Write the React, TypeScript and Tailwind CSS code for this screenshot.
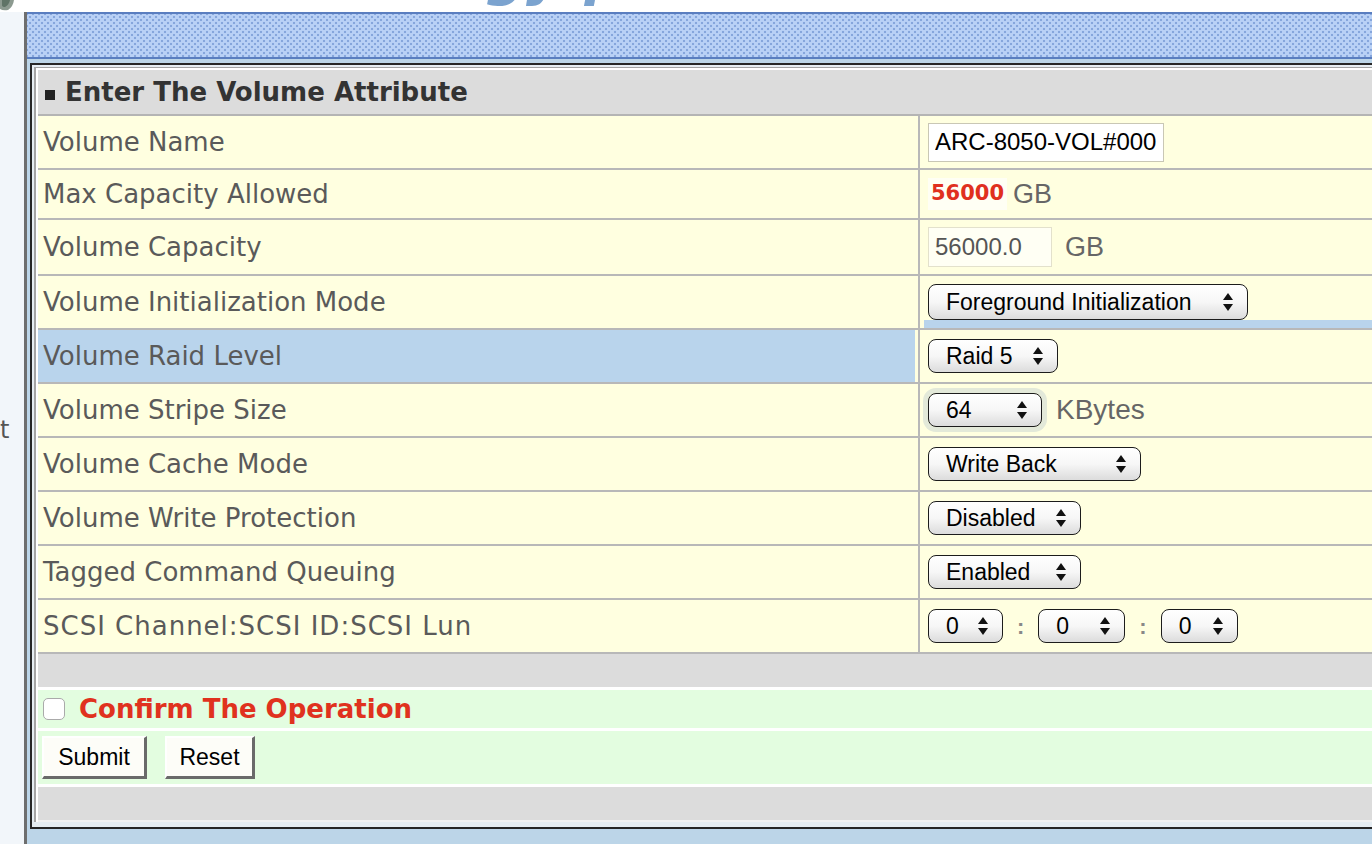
import React from "react";

const LABEL = "font-['DejaVu_Sans','Verdana',sans-serif]";
const UI = "font-['Liberation_Sans','Helvetica','Arial',sans-serif]";

function Arrows() {
  return (
    <svg width="10" height="18" viewBox="0 0 10 18" className="shrink-0">
      <path d="M5 0 L10 7 L0 7 Z" fill="#111" />
      <path d="M0 11 L10 11 L5 18 Z" fill="#111" />
    </svg>
  );
}

function Select({ value, className, focus }: { value: string; className: string; focus?: boolean }) {
  return (
    <div
      className={`flex items-center justify-between rounded-[8px] border-[1.5px] border-[#1c1c1c] bg-gradient-to-b from-white via-[#f7f7f7] to-[#dcdcdc] pl-[17px] pr-[14px] text-[23px] text-black ${UI} ${focus ? "shadow-[0_0_0_5px_#e3e9d9]" : ""} ${className}`}
    >
      <span className="leading-none">{value}</span>
      <Arrows />
    </div>
  );
}

function Unit({ children, className = "" }: { children: React.ReactNode; className?: string }) {
  return <span className={`text-[27px] text-[#666] ${UI} ${className}`}>{children}</span>;
}

type Row = { label: string; h: string; content: React.ReactNode; hl?: boolean; bar?: boolean; wide?: boolean };

const rows: Row[] = [
  {
    label: "Volume Name",
    h: "h-[54px]",
    content: (
      <input
        defaultValue="ARC-8050-VOL#000"
        className={`h-[39px] w-[236px] border border-[#c9c7b5] bg-white pl-[6px] text-[24px] text-black outline-none ${UI}`}
      />
    ),
  },
  {
    label: "Max Capacity Allowed",
    h: "h-[50px]",
    content: (
      <div className="flex items-center">
        <span className={`bg-[#fffff4] px-[3px] text-[21px] font-bold text-[#e0301e] ${LABEL}`}>56000</span>
        <Unit className="ml-[6px]">GB</Unit>
      </div>
    ),
  },
  {
    label: "Volume Capacity",
    h: "h-[56px]",
    content: (
      <div className="flex items-center">
        <input
          defaultValue="56000.0"
          className={`h-[40px] w-[124px] border border-[#e3e1cc] bg-[#fffff4] pl-[6px] text-[24px] text-[#555] outline-none ${UI}`}
        />
        <Unit className="ml-[13px]">GB</Unit>
      </div>
    ),
  },
  {
    label: "Volume Initialization Mode",
    h: "h-[54px]",
    bar: true,
    content: <Select value="Foreground Initialization" className="h-[36px] w-[320px]" />,
  },
  { label: "Volume Raid Level", h: "h-[54px]", hl: true, content: <Select value="Raid 5" className="h-[34px] w-[130px]" /> },
  {
    label: "Volume Stripe Size",
    h: "h-[54px]",
    content: (
      <div className="flex items-center">
        <Select value="64" className="h-[34px] w-[114px]" focus />
        <Unit className="ml-[14px] text-[28px]">KBytes</Unit>
      </div>
    ),
  },
  { label: "Volume Cache Mode", h: "h-[54px]", content: <Select value="Write Back" className="h-[34px] w-[213px]" /> },
  { label: "Volume Write Protection", h: "h-[54px]", content: <Select value="Disabled" className="h-[34px] w-[153px]" /> },
  { label: "Tagged Command Queuing", h: "h-[54px]", content: <Select value="Enabled" className="h-[34px] w-[153px]" /> },
  {
    label: "SCSI Channel:SCSI ID:SCSI Lun",
    h: "h-[54px]",
    wide: true,
    content: (
      <div className="flex items-center">
        <Select value="0" className="h-[34px] w-[75px]" />
        <span className={`mx-[14px] text-[22px] font-bold text-[#888] ${UI}`}>:</span>
        <Select value="0" className="h-[34px] w-[87px]" />
        <span className={`mx-[14px] text-[22px] font-bold text-[#888] ${UI}`}>:</span>
        <Select value="0" className="h-[34px] w-[77px]" />
      </div>
    ),
  },
];

export default function App() {
  return (
    <div className={`flex h-[844px] w-[1372px] flex-col overflow-hidden bg-white ${LABEL}`}>
      {/* clipped banner above the frame */}
      <div className="flex h-[12px] shrink-0 overflow-hidden">
        <svg width="16" height="12" viewBox="0 0 16 12" className="shrink-0">
          <path d="M0 0 H14 Q13 7 8 10 Q3 11 0 9 Z" fill="#8c9a90" />
          <path d="M2 0 H10 Q9 5 5 7 Q2 7 2 5 Z" fill="#5f7366" />
        </svg>
        <span className="ml-[470px] mt-[-53px] whitespace-nowrap text-[56px] font-bold italic leading-none text-[#7ba3cf]">
          gy<span className="ml-[22px]">p</span>
        </span>
      </div>

      <div className="flex min-h-0 flex-1">
        <div className="w-[24px] shrink-0 bg-[#f2f6fa] pt-[400px]">
          <span className="text-[24px] text-[#555]">t</span>
        </div>

        <div className="flex w-[1500px] shrink-0 flex-col border-l-[3px] border-[#6e6e6e] bg-[#bcd5e8]">
          <div className="h-[47px] shrink-0 border-y-2 border-[#5a7ec0] bg-[#b9d1f6] bg-[radial-gradient(circle,#86a6dc_1px,transparent_1.6px),radial-gradient(circle,#86a6dc_1px,transparent_1.6px)] bg-[size:6px_6px] bg-[position:0_0,3px_3px]" />

          <div className="ml-[3px] mt-[4px] border-2 border-[#262626] bg-[#e6edf2] p-[2px] pb-[5px] pr-0">
            <div className="border-l-2 border-t border-[#a4a4a4] bg-white pl-[2px] pt-[2px]">
              <div className="flex h-[46px] items-center border-b-2 border-[#b4b4b4] bg-[#dcdcdc] pl-[7px] text-[#333]">
                <span className="mr-[10px] mt-[6px] h-[10px] w-[10px] bg-[#222]" />
                <span className="text-[26px] font-bold">Enter The Volume Attribute</span>
              </div>

              {rows.map((r) => (
                <div key={r.label} className={`flex border-b-2 border-[#b8b8b8] bg-[#ffffe0] ${r.h}`}>
                  <div className="flex w-[880px] shrink-0 pr-[3px]">
                    <div
                      className={`flex flex-1 items-center pl-[5px] text-[26px] text-[#5a5a5a] ${r.hl ? "bg-[#b9d4ec]" : ""} ${r.wide ? "tracking-[1px]" : ""}`}
                    >
                      {r.label}
                    </div>
                  </div>
                  <div className="relative flex flex-1 items-center border-l-2 border-[#b8b8b8] pl-[8px]">
                    {r.content}
                    {r.bar && <div className="absolute bottom-0 left-[4px] right-0 h-[8px] bg-[#b9d4ec]" />}
                  </div>
                </div>
              ))}

              <div className="box-content h-[33px] border-b-[3px] border-white bg-[#dcdcdc]" />
              <div className="box-content flex h-[38px] items-center border-b-[3px] border-white bg-[#e3fde0] pl-[5px]">
                <input type="checkbox" className="h-[22px] w-[22px] appearance-none rounded-[5px] border border-[#aaa] bg-white" />
                <span className="ml-[14px] text-[26px] font-bold text-[#e0321e]">Confirm The Operation</span>
              </div>
              <div className="box-content flex h-[53px] items-center gap-[18px] border-b-[3px] border-white bg-[#e3fde0] pl-[4px]">
                <button className={`h-[43px] w-[105px] border-2 border-b-[3px] border-r-[3px] border-l-white border-t-white border-b-[#6a6a6a] border-r-[#6a6a6a] bg-[#fdfdf8] text-[23px] text-black ${UI}`}>
                  Submit
                </button>
                <button className={`h-[43px] w-[90px] border-2 border-b-[3px] border-r-[3px] border-l-white border-t-white border-b-[#6a6a6a] border-r-[#6a6a6a] bg-[#fdfdf8] text-[23px] text-black ${UI}`}>
                  Reset
                </button>
              </div>
              <div className="box-content h-[33px] border-b-2 border-[#f2f2f2] bg-[#dcdcdc]" />
            </div>
          </div>
        </div>
      </div>
    </div>
  );
}
